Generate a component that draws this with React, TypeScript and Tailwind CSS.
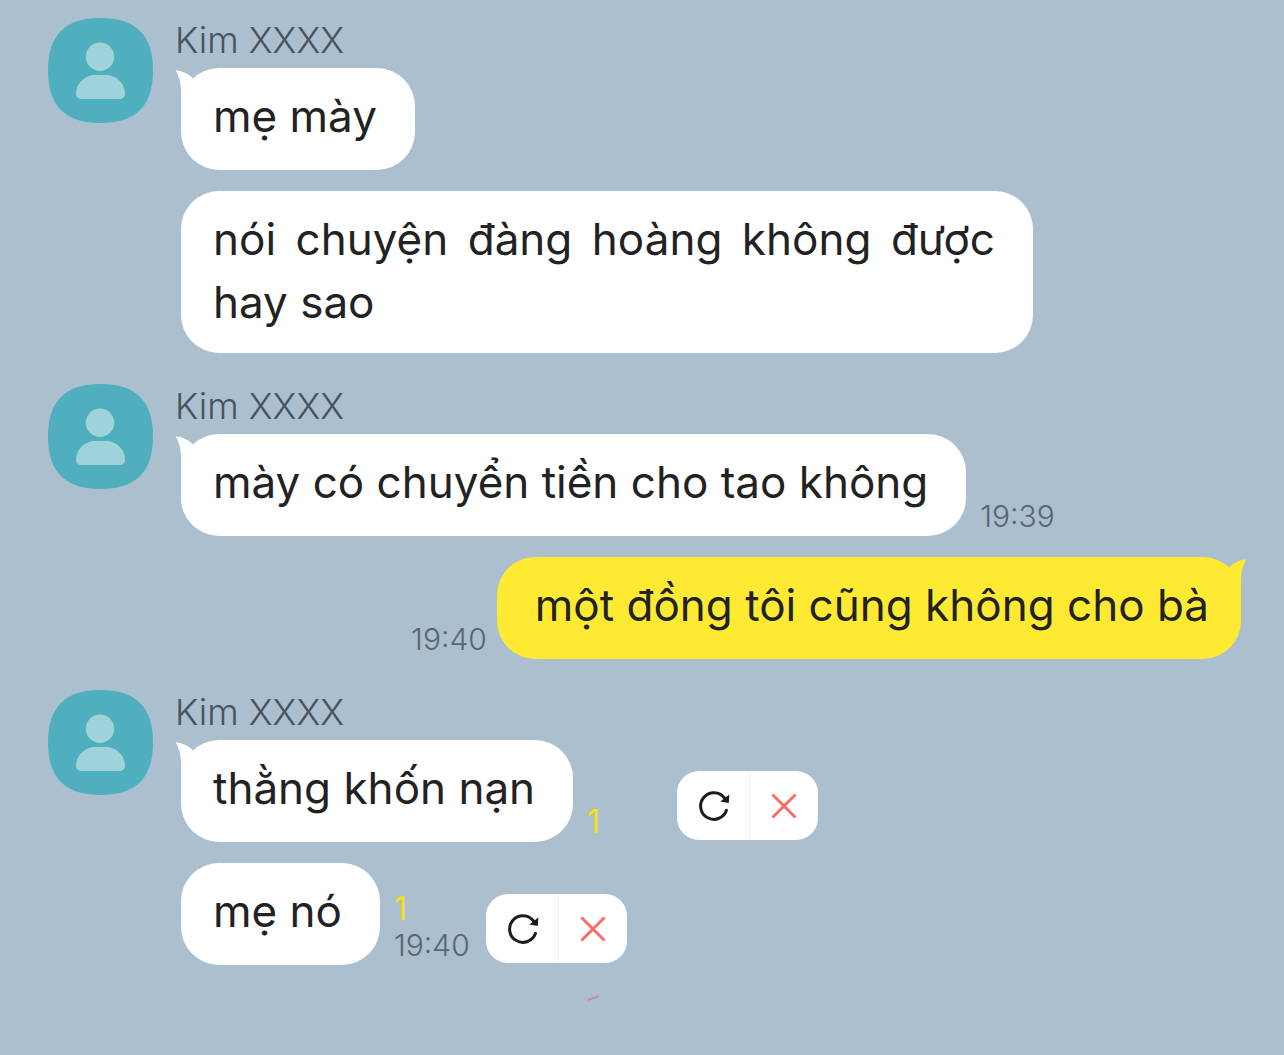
import clsx from "clsx";

type Message = {
  text: string;
  time?: string;
  unread?: number;
  failed?: boolean;
  wide?: boolean;
};

type Group = {
  sender?: string;
  messages: Message[];
};

const groups: Group[] = [
  {
    sender: "Kim XXXX",
    messages: [
      { text: "mẹ mày" },
      { text: "nói chuyện đàng hoàng không được hay sao", wide: true }
    ]
  },
  {
    sender: "Kim XXXX",
    messages: [{ text: "mày có chuyển tiền cho tao không", time: "19:39" }]
  },
  {
    messages: [{ text: "một đồng tôi cũng không cho bà", time: "19:40" }]
  },
  {
    sender: "Kim XXXX",
    messages: [
      { text: "thằng khốn nạn", unread: 1, failed: true },
      { text: "mẹ nó", time: "19:40", unread: 1, failed: true }
    ]
  }
];

function Avatar() {
  return (
    <svg
      viewBox="0 0 105 105"
      className="h-[105px] w-[105px] shrink-0"
      aria-hidden="true"
    >
      <path
        d="M52.5 0C88 0 105 17 105 52.5S88 105 52.5 105 0 88 0 52.5 17 0 52.5 0Z"
        fill="#50afbe"
      />
      <circle cx="52" cy="38.7" r="14.2" fill="#9fd3da" />
      <path
        d="M28 76C28 65 37 57 47 57H58C68 57 77 65 77 76Q77 81 71 81H34Q28 81 28 76Z"
        fill="#9fd3da"
      />
    </svg>
  );
}

function Tail({ mine }: { mine?: boolean }) {
  return (
    <svg
      viewBox="0 0 32 42"
      className={clsx(
        "absolute top-0 h-[42px] w-8",
        mine ? "-right-[6px] -scale-x-100" : "-left-[6px]"
      )}
      aria-hidden="true"
    >
      <path
        d="M0.5 2.3C7 3 13 5.5 18 10.3L30 22L6 42V24C6 15 4 8 0.5 2.3Z"
        fill={mine ? "#ffea33" : "#ffffff"}
      />
    </svg>
  );
}

function Bubble({
  message,
  mine,
  tail
}: {
  message: Message;
  mine?: boolean;
  tail?: boolean;
}) {
  return (
    <div
      className={clsx(
        "relative min-h-[102px] rounded-[38px] pt-[17px] pb-[19px]",
        mine ? "bg-[#ffea33] pr-8 pl-[38px]" : "bg-white pr-[38px] pl-8",
        message.wide && "max-w-[852px]"
      )}
    >
      {tail && <Tail mine={mine} />}
      <p className="relative text-justify text-[44px] leading-[63px] text-[#222222]">
        {message.text}
      </p>
    </div>
  );
}

function RetryActions() {
  return (
    <div className="mb-[2px] ml-[6px] flex h-[69px] overflow-hidden rounded-[22px] bg-white">
      <button
        type="button"
        aria-label="Gửi lại"
        className="flex w-[73px] items-center justify-center border-r border-[#f2f2f2]"
      >
        <svg viewBox="-1 0 36 36" className="h-9 w-9" fill="none">
          <path
            d="M30.5 22.3A13.3 13.3 0 1 1 28.5 10"
            stroke="#1c1c1c"
            strokeWidth="3"
            strokeLinecap="round"
          />
          <path d="M33.3 6.5L32.8 15L24.3 13.5Z" fill="#1c1c1c" />
        </svg>
      </button>
      <button
        type="button"
        aria-label="Xóa"
        className="flex w-[68px] items-center justify-center"
      >
        <svg viewBox="0 0 28 28" className="h-7 w-7" fill="none">
          <path
            d="M2.5 2.5L25.5 25.5M25.5 2.5L2.5 25.5"
            stroke="#fb6a68"
            strokeWidth="3"
          />
        </svg>
      </button>
    </div>
  );
}

function MessageRow({
  message,
  mine,
  tail
}: {
  message: Message;
  mine?: boolean;
  tail?: boolean;
}) {
  return (
    <li className={clsx("flex items-end", mine && "flex-row-reverse")}>
      <Bubble message={message} mine={mine} tail={tail} />
      {(message.time || message.unread) && (
        <div className="mr-[10px] ml-[14px] flex min-w-[74px] shrink-0 flex-col pb-[2px] text-[30px] leading-9 font-light text-[#586672]">
          {message.unread && (
            <span className="text-[32px] font-normal text-[#f2e11c]">
              {message.unread}
            </span>
          )}
          {message.time && <time>{message.time}</time>}
        </div>
      )}
      {message.failed && <RetryActions />}
    </li>
  );
}

export default function App() {
  return (
    <main className="min-h-screen bg-[#abbfcf] pt-[18px] pr-[43px] pb-10 pl-12 font-['Inter','Noto_Sans',sans-serif]">
      {groups.map((group, i) =>
        group.sender ? (
          <section key={i} className={clsx("flex", i > 0 && "mt-[31px]")}>
            <Avatar />
            <div className="ml-[22px] min-w-0 flex-1">
              <h2 className="mb-[6px] text-[36px] leading-[44px] font-light text-[#47535e]">
                {group.sender}
              </h2>
              <ul className="ml-[6px] flex flex-col gap-[21px]">
                {group.messages.map((message, j) => (
                  <MessageRow key={j} message={message} tail={j === 0} />
                ))}
              </ul>
            </div>
          </section>
        ) : (
          <ul key={i} className="mt-[21px]">
            {group.messages.map((message, j) => (
              <MessageRow key={j} message={message} mine tail={j === 0} />
            ))}
          </ul>
        )
      )}
      <svg
        viewBox="0 0 14 6"
        className="mt-[30px] ml-[539px] h-[6px] w-[14px]"
        aria-hidden="true"
      >
        <path d="M1 5Q6 3 12 1" stroke="#cf86b4" strokeWidth="2" fill="none" />
      </svg>
    </main>
  );
}
